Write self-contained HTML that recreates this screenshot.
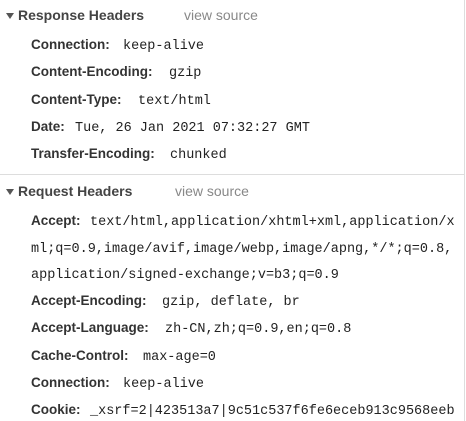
<!DOCTYPE html>
<html><head><meta charset="utf-8"><style>
html,body{margin:0;padding:0;background:#fff;width:466px;height:421px;overflow:hidden;position:relative}
.t{position:absolute;white-space:nowrap;line-height:18px}
.h{font:bold 14px "Liberation Sans",sans-serif;color:#444;left:18px}
.vs{font:14px "Liberation Sans",sans-serif;color:#888}
.r{position:absolute;left:31px;white-space:nowrap;line-height:18px}
.k{display:inline-block;font:bold 13.5px "Liberation Sans",sans-serif;color:#333}
.v{font:13.5px "Liberation Mono",monospace;color:#222}
.tri{position:absolute;left:6px;width:0;height:0;border-left:4px solid transparent;border-right:4px solid transparent;border-top:6px solid #555}
</style></head><body>
<div style="position:absolute;left:464px;top:0;width:1px;height:421px;background:#ddd"></div>
<div style="position:absolute;left:0;top:174px;width:464px;height:1px;background:#ddd"></div>

<div class="tri" style="top:13px"></div>
<div class="t h" style="top:7px">Response Headers</div>
<div class="t vs" style="left:184px;top:7px">view source</div>
<div class="r" style="top:36px"><span class="k" style="width:92px">Connection:</span><span class="v">keep-alive</span></div>
<div class="r" style="top:63px"><span class="k" style="width:138px">Content-Encoding:</span><span class="v">gzip</span></div>
<div class="r" style="top:91px"><span class="k" style="width:107px">Content-Type:</span><span class="v">text/html</span></div>
<div class="r" style="top:118px"><span class="k" style="width:44px">Date:</span><span class="v">Tue, 26 Jan 2021 07:32:27 GMT</span></div>
<div class="r" style="top:145px"><span class="k" style="width:139px">Transfer-Encoding:</span><span class="v">chunked</span></div>

<div class="tri" style="top:189px"></div>
<div class="t h" style="top:183px">Request Headers</div>
<div class="t vs" style="left:175px;top:183px">view source</div>
<div class="r" style="top:212px"><span class="k" style="width:59px">Accept:</span><span class="v">text/html,application/xhtml+xml,application/x</span></div>
<div class="r" style="top:239px"><span class="v">ml;q=0.9,image/avif,image/webp,image/apng,*/*;q=0.8,</span></div>
<div class="r" style="top:265px"><span class="v">application/signed-exchange;v=b3;q=0.9</span></div>
<div class="r" style="top:292px"><span class="k" style="width:131px">Accept-Encoding:</span><span class="v">gzip, deflate, br</span></div>
<div class="r" style="top:319px"><span class="k" style="width:134px">Accept-Language:</span><span class="v">zh-CN,zh;q=0.9,en;q=0.8</span></div>
<div class="r" style="top:347px"><span class="k" style="width:112px">Cache-Control:</span><span class="v">max-age=0</span></div>
<div class="r" style="top:374px"><span class="k" style="width:92px">Connection:</span><span class="v">keep-alive</span></div>
<div class="r" style="top:401px"><span class="k" style="width:59px">Cookie:</span><span class="v">_xsrf=2|423513a7|9c51c537f6fe6eceb913c9568eeb</span></div>
</body></html>
